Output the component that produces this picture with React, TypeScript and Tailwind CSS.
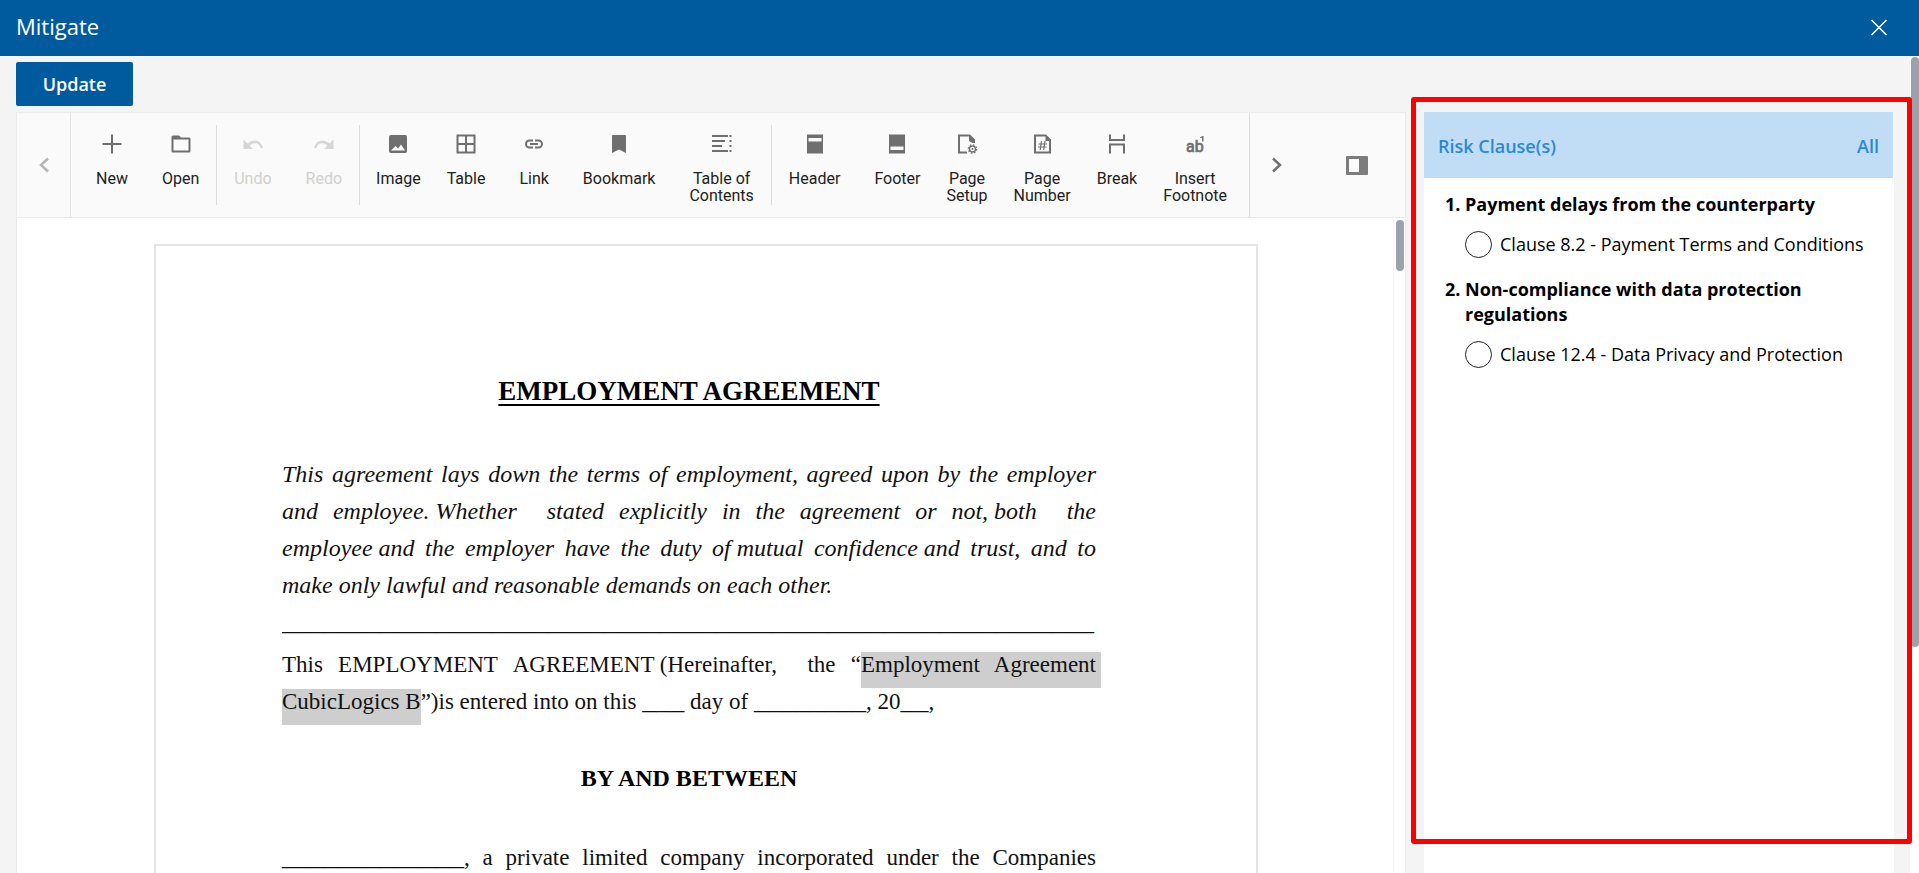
import React from "react";

type Tool = { label: string; icon: React.ReactNode; pad: string; disabled?: boolean };

const Icon = ({ children }: { children: React.ReactNode }) => (
  <svg viewBox="0 0 20 20" className="h-5 w-5 shrink-0 overflow-visible" fill="currentColor" aria-hidden="true">
    {children}
  </svg>
);

const groups: Tool[][] = [
  [
    { label: "New", pad: "px-[17px]", icon: <path d="M9 .5h2V9h8.500v2H11v8.500H9V11H.5V9H9z" /> },
    { label: "Open", pad: "px-[17px]", icon: <path fillRule="evenodd" d="M2 1.500h6l2 2h8q1.500 0 1.500 1.500v12q0 1.500-1.500 1.500H2Q.5 18.500.5 17V3Q.5 1.500 2 1.500zM2.500 5.500v11h15v-11z" /> },
  ],
  [
    { label: "Undo", pad: "px-[17px]", disabled: true, icon: <path d="M.5 5.500V15H10L6.500 11.500Q9 9.200 12 9.200q4.300 0 6 5.300l2-.7Q17.500 6.500 11.800 6.500 7.800 6.500 4.500 9.500z" /> },
    { label: "Redo", pad: "px-[17px]", disabled: true, icon: <path d="M19.500 5.500V15H10l3.500-3.500Q11 9.200 8 9.200q-4.300 0-6 5.300l-2-.7Q2.500 6.500 8.200 6.500q4 0 7.300 3z" /> },
  ],
  [
    { label: "Image", pad: "pl-4 pr-[13px]", icon: <path fillRule="evenodd" d="M3 1h14q2 0 2 2v14q0 2-2 2H3q-2 0-2-2V3q0-2 2-2zM3 16.500h14l-4-6-3 4-2.500-2.500z" /> },
    { label: "Table", pad: "pl-[13px] pr-[17px]", icon: <path fillRule="evenodd" d="M.5.5h19v19H.5zM2.500 2.500V9H9V2.500zM11 2.500V9h6.500V2.500zM2.500 11v6.500H9V11zM11 11v6.500h6.500V11z" /> },
    { label: "Link", pad: "px-[17px]", icon: <path d="M9 5.500v2H5.500a2.500 2.500 0 0 0 0 5H9v2H5.500a4.500 4.500 0 0 1 0-9zM11 5.500h3.500a4.500 4.500 0 0 1 0 9H11v-2h3.500a2.500 2.500 0 0 0 0-5H11zM6 9h8v2H6z" /> },
    { label: "Bookmark", pad: "px-[17px]", icon: <path d="M3 2q0-1 1-1h12q1 0 1 1v17l-7-3.500L3 19z" /> },
    { label: "Table of\nContents", pad: "px-[17px]", icon: <path d="M0 1h16v2H0zM17.500 1h2v2h-2zM0 6h13v2H0zM17.500 6h2v2h-2zM0 11h10v2H0zM17.500 11h2v2h-2zM0 16h16v2H0zM17.500 16h2v2h-2z" /> },
  ],
  [
    { label: "Header", pad: "px-[17px]", icon: <path fillRule="evenodd" d="M2 .5h16v19H2zM3.500 4v3.500h13V4z" /> },
    { label: "Footer", pad: "pl-[17px] pr-[13px]", icon: <path fillRule="evenodd" d="M2 .5h16v19H2zM3.500 12.500V16h13v-3.500z" /> },
    { label: "Page\nSetup", pad: "px-[13px]", icon: <><path d="M1 .5h12l5 5V9h-2.500L12 7V2.500H3v15h7v2H1z" /><circle cx="15.500" cy="15" r="3" fill="none" stroke="currentColor" strokeWidth="1.300" /><circle cx="15.500" cy="15" r="1" /><circle cx="15.500" cy="15" r="4.200" fill="none" stroke="currentColor" strokeWidth="1.300" strokeDasharray="1.500 1.800" /></> },
    { label: "Page\nNumber", pad: "px-[13px]", icon: <><path fillRule="evenodd" d="M2 .5h12l5 5v14H2zM4 2.500v15h13V7h-3.500V2.500z" /><path d="M9.500 7l-1.300 9M13 7l-1.300 9M6.500 10h8.500M6 13h8.500" stroke="currentColor" strokeWidth="1.200" /></> },
    { label: "Break", pad: "px-[13px]", icon: <path d="M2 .5h2V5h12V.5h2V7H2zM2 9.500h16v10h-2v-8H4v8H2z" /> },
    { label: "Insert\nFootnote", pad: "pl-[13px] pr-5", icon: <><text x="1" y="18" fontSize="16" fontFamily="Roboto, sans-serif" stroke="currentColor" strokeWidth=".7">ab</text><path d="M15 3.500L17.500 2h1v5.500H17V4h-2z" /></> },
  ],
];

function ToolButton({ tool }: { tool: Tool }) {
  return (
    <button
      type="button"
      disabled={tool.disabled}
      className={`flex flex-col items-center text-[#6f6f6f] disabled:text-[#d6d6d6] ${tool.pad}`}
    >
      <span className="flex h-9 items-center"><Icon>{tool.icon}</Icon></span>
      <span className={`mt-2 whitespace-pre-line text-center text-base leading-[17px] ${tool.disabled ? "text-[#cfcfcf]" : "text-[#212121]"}`}>
        {tool.label}
      </span>
    </button>
  );
}

function Toolbar() {
  return (
    <div className="flex h-[105px] border-b border-[#e9e9e9] bg-[#fafafa] font-[Roboto,sans-serif]">
      <button type="button" aria-label="Scroll left" className="flex w-[54px] shrink-0 items-center justify-center border-r border-[#e3e3e3] text-[#b5b5b5]">
        <svg viewBox="0 0 10 16" className="h-4 w-2.5" fill="none" stroke="currentColor" strokeWidth="2.500"><path d="M9 1.500L2 8l7 6.500" /></svg>
      </button>
      <div className="flex min-w-0 flex-1 items-start overflow-hidden pl-2 pt-3">
        {groups.map((group, i) => (
          <div key={i} className={`flex h-20 shrink-0 items-start pt-px ${i < groups.length - 1 ? "border-r border-[#dcdcdc]" : ""}`}>
            {group.map((tool) => <ToolButton key={tool.label} tool={tool} />)}
          </div>
        ))}
      </div>
      <button type="button" aria-label="Scroll right" className="flex w-[54px] shrink-0 items-center justify-center border-l border-[#dcdcdc] text-[#6f6f6f]">
        <svg viewBox="0 0 10 16" className="h-4 w-2.5" fill="none" stroke="currentColor" strokeWidth="2.500"><path d="M1 1.500L8 8l-7 6.500" /></svg>
      </button>
      <button type="button" aria-label="Toggle pane" className="flex w-[102px] shrink-0 items-center justify-center pl-1.5 text-[#7c7c7c]">
        <svg viewBox="0 0 22 19" className="h-[19px] w-[22px]" fill="currentColor"><path fillRule="evenodd" d="M1 0h20q1 0 1 1v17q0 1-1 1H1q-1 0-1-1V1q0-1 1-1zM3 3v13h10V3z" /></svg>
      </button>
    </div>
  );
}

const Line = ({ children }: { children: React.ReactNode }) => (
  <span className="block whitespace-nowrap [text-align-last:justify]">{children}</span>
);
const Tight = ({ children }: { children: React.ReactNode }) => <span className="inline-block">{children}</span>;
const Blank = ({ count }: { count: number }) => <span className="text-[28px] leading-none">{"_".repeat(count)}</span>;

function Document() {
  return (
    <div className="relative min-h-0 flex-1 overflow-hidden bg-white pl-[137px] pr-[147px] pt-[26px]">
      <article className="min-h-[1400px] border-2 border-[#e4e4e4] bg-white pl-[126px] pr-[160px] pt-[123px] font-['Liberation_Serif',serif] text-[24px] leading-[37px] text-[#111]">
        <h1 className="text-center text-[27px] font-bold leading-[44px] text-black underline decoration-2 underline-offset-4">EMPLOYMENT AGREEMENT</h1>
        <p className="mt-[43px] italic">
          <Line>This agreement lays down the terms of employment, agreed upon by the employer</Line>
          <Line>and <Tight>employee. Whether</Tight> &nbsp;stated explicitly in the agreement or <Tight>not, both</Tight> &nbsp;the</Line>
          <Line><Tight>employee and</Tight> the employer have the duty <Tight>of mutual</Tight> <Tight>confidence and</Tight> trust, and to</Line>
          make only lawful and reasonable demands on each other.
        </p>
        <p className="overflow-hidden whitespace-nowrap"><Blank count={58} /></p>
        <p className="mt-[5px] text-[23px]">
          <Line>This EMPLOYMENT <Tight>AGREEMENT (Hereinafter,</Tight> &nbsp;the “<mark className="-mr-[5px] bg-[#cecece] pb-[11px] pr-[5px] text-inherit">Employment Agreement</mark></Line>
          <mark className="bg-[#cecece] pb-[11px] text-inherit">CubicLogics B</mark>”)is entered into on this <Blank count={3} /> day of <Blank count={8} />, 20<Blank count={2} />,
        </p>
        <h2 className="mt-10 text-center font-bold text-black">BY AND BETWEEN</h2>
        <p className="mt-[42px] text-[23px]">
          <Line><Blank count={13} />, a private limited company incorporated under the Companies</Line>
        </p>
      </article>
      <div className="absolute right-0 top-0 h-full w-3 border-l border-[#f3f3f3] bg-white">
        <div className="mx-auto mt-0.5 h-[51px] w-2 rounded-full bg-[#9aa3ab]" />
      </div>
    </div>
  );
}

const risks = [
  { title: "Payment delays from the counterparty", clause: "Clause 8.2 - Payment Terms and Conditions" },
  { title: "Non-compliance with data protection regulations", clause: "Clause 12.4 - Data Privacy and Protection" },
];

function RiskPanel() {
  return (
    <aside className="relative w-[470px] shrink-0 bg-white">
      <header className="mr-px flex h-[66px] items-center justify-between bg-[#c0ddf5] px-3.5 pt-0.5 text-[18px] font-semibold text-[#2b88d8]">
        <h2>Risk Clause(s)</h2>
        <button type="button">All</button>
      </header>
      <ol className="list-decimal pl-[41px] pr-6 pt-[14px] text-[18px] leading-[25px] text-black">
        {risks.map((risk) => (
          <li key={risk.title} className="mb-[19px] font-bold">
            {risk.title}
            <label className="mt-[14px] flex items-center gap-2 whitespace-nowrap font-normal">
              <input type="radio" name="clause" className="h-[27px] w-[27px] shrink-0 appearance-none rounded-full border border-[#222]" />
              {risk.clause}
            </label>
          </li>
        ))}
      </ol>
      <div className="pointer-events-none absolute -left-[13px] -right-[18px] -top-[15px] h-[747px] rounded-[3px] border-[5px] border-[#ff0000]" />
    </aside>
  );
}

export default function App() {
  return (
    <div className="flex h-screen flex-col overflow-hidden bg-[#f4f4f4] font-['Open_Sans',sans-serif]">
      <header className="flex h-14 shrink-0 items-center justify-between bg-[#005a9e] pl-4 pr-[30px] text-white">
        <h1 className="pb-1 text-[22px]">Mitigate</h1>
        <button type="button" aria-label="Close">
          <svg viewBox="0 0 20 20" className="h-5 w-5" fill="none" stroke="currentColor" strokeWidth="1.500"><path d="M2.500 2l15 15M17.500 2l-15 15" /></svg>
        </button>
      </header>
      <div className="flex min-h-0 flex-1">
        <main className="flex min-w-0 flex-1 flex-col pl-4 pr-4 pt-1.5">
          <button type="button" className="h-11 w-[117px] shrink-0 rounded-[2px] bg-[#005a9e] text-[18px] font-semibold text-white">Update</button>
          <div className="mt-1.5 flex min-h-0 flex-1 gap-[18px]">
            <section className="flex min-w-0 flex-1 flex-col border border-b-0 border-[#ececec]">
              <Toolbar />
              <Document />
            </section>
            <RiskPanel />
          </div>
        </main>
        <div className="w-[9px] shrink-0 bg-white pl-px">
          <div className="mt-px h-[590px] rounded-full bg-[#9aa3ab]" />
        </div>
      </div>
    </div>
  );
}
